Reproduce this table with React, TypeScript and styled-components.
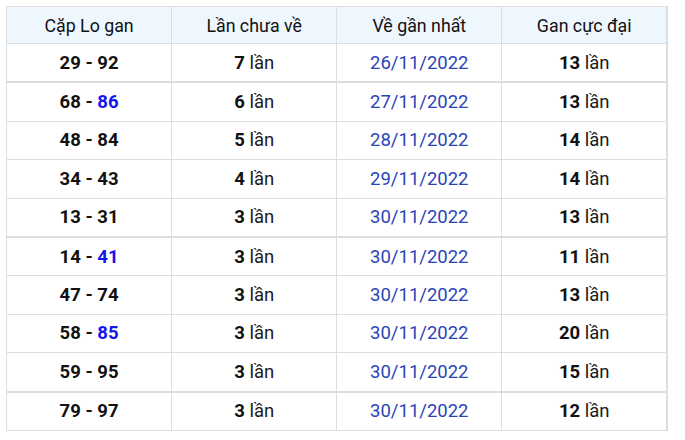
import React from "react";
import styled, { createGlobalStyle } from "styled-components";

const Global = createGlobalStyle`
  html, body { margin: 0; padding: 0; background: #ffffff; }
  body { font-family: Roboto, "Liberation Sans", Arial, sans-serif; }
`;

const Wrap = styled.div`
  padding: 6px 0 0 6px;
`;

const Table = styled.table`
  width: 662px;
  border-collapse: collapse;
  table-layout: fixed;
  border-right: 2px solid #dcdde3;
`;

const HeadCell = styled.th`
  height: 36px;
  padding: 0;
  background: #eef6fe;
  border: 1px solid #dcdde3;
  font-weight: 400;
  font-size: 17.8px;
  color: #111;
  text-align: center;
`;

const Row = styled.tr<{ $thick?: boolean }>`
  td {
    border-top: ${(p) => (p.$thick ? "2px" : "1px")} solid #dcdde3;
  }
`;

const Cell = styled.td`
  height: 37.4px;
  padding: 0;
  border: 1px solid #dcdde3;
  text-align: center;
  font-size: 18.5px;
  color: #1a1a1a;
`;

const Bold = styled.b`
  font-weight: 700;
  color: #111;
`;

const Hot = styled.span`
  font-weight: 700;
  color: #1515f0;
`;

const DateText = styled.span`
  color: #2a44b8;
`;

type R = { a: string; b: string; hot?: boolean; n: number; date: string; max: number; thick?: boolean };

const rows: R[] = [
  { a: "29", b: "92", n: 7, date: "26/11/2022", max: 13 },
  { a: "68", b: "86", hot: true, n: 6, date: "27/11/2022", max: 13, thick: true },
  { a: "48", b: "84", n: 5, date: "28/11/2022", max: 14 },
  { a: "34", b: "43", n: 4, date: "29/11/2022", max: 14 },
  { a: "13", b: "31", n: 3, date: "30/11/2022", max: 13 },
  { a: "14", b: "41", hot: true, n: 3, date: "30/11/2022", max: 11, thick: true },
  { a: "47", b: "74", n: 3, date: "30/11/2022", max: 13 },
  { a: "58", b: "85", hot: true, n: 3, date: "30/11/2022", max: 20 },
  { a: "59", b: "95", n: 3, date: "30/11/2022", max: 15 },
  { a: "79", b: "97", n: 3, date: "30/11/2022", max: 12, thick: true },
];

export default function App() {
  return (
    <>
      <Global />
      <Wrap>
        <Table>
          <thead>
            <tr>
              <HeadCell>Cặp Lo gan</HeadCell>
              <HeadCell>Lần chưa về</HeadCell>
              <HeadCell>Về gần nhất</HeadCell>
              <HeadCell>Gan cực đại</HeadCell>
            </tr>
          </thead>
          <tbody>
            {rows.map((r, i) => (
              <Row key={i} $thick={r.thick}>
                <Cell>
                  <Bold>
                    {r.a} - {r.hot ? <Hot>{r.b}</Hot> : r.b}
                  </Bold>
                </Cell>
                <Cell>
                  <Bold>{r.n}</Bold> lần
                </Cell>
                <Cell>
                  <DateText>{r.date}</DateText>
                </Cell>
                <Cell>
                  <Bold>{r.max}</Bold> lần
                </Cell>
              </Row>
            ))}
          </tbody>
        </Table>
      </Wrap>
    </>
  );
}
